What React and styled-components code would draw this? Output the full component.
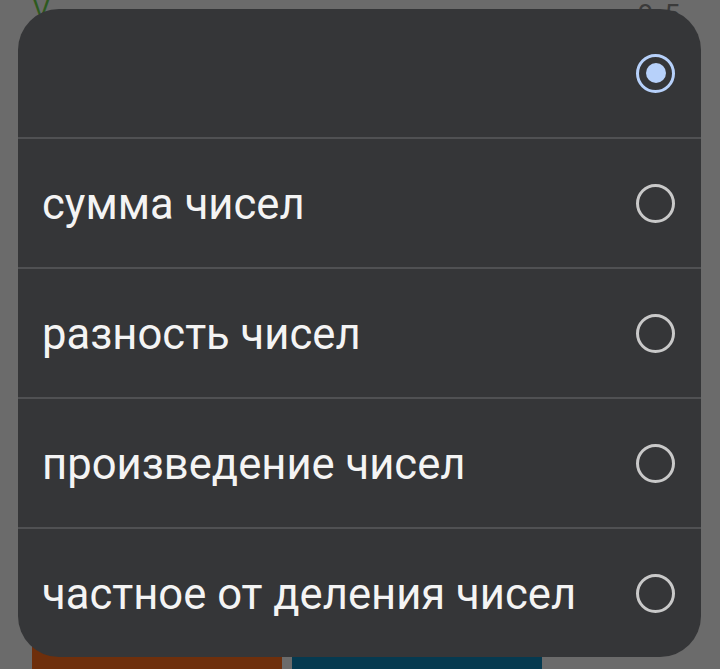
import styled, { createGlobalStyle } from 'styled-components'

const GlobalStyle = createGlobalStyle`
  html, body {
    margin: 0;
    padding: 0;
    background: #6b6b6b;
    font-family: Roboto, "Noto Sans", sans-serif;
  }
`

const Screen = styled.div`
  position: relative;
  width: 720px;
  height: 669px;
  overflow: hidden;
  background: #6b6b6b;
  display: flex;
  flex-direction: column;
  justify-content: space-between;
`

const StatusRow = styled.div`
  display: flex;
  justify-content: space-between;
  align-items: flex-start;
  padding: 0 38px 0 33px;
  height: 30px;
`

const AppTitle = styled.span`
  font-size: 26px;
  line-height: 20px;
  color: #2d5a1e;
`

const Clock = styled.span`
  font-size: 28px;
  line-height: 30px;
  color: #3b3b3b;
  letter-spacing: 2px;
`

const ButtonRow = styled.div`
  display: flex;
  gap: 10px;
  padding: 0 0 0 32px;
  margin-bottom: -26px;
`

const ActionButton = styled.div`
  width: 250px;
  height: 80px;
  border-radius: 20px;
  background: ${(p) => p.color};
`

const Dialog = styled.div`
  position: absolute;
  left: 18px;
  top: 9px;
  width: 683px;
  border-radius: 41px;
  background: #353638;
  overflow: hidden;
  display: flex;
  flex-direction: column;
`

const Option = styled.div`
  height: 128px;
  display: flex;
  align-items: center;
  justify-content: space-between;
  padding: 0 26px 0 24px;
  box-sizing: border-box;
  & + & {
    border-top: 2px solid #505153;
    height: 130px;
  }
`

const Label = styled.span`
  font-size: 43.6px;
  color: #f4f4f4;
  padding-top: 3px;
  white-space: nowrap;
`

const Radio = styled.span`
  width: 39px;
  height: 39px;
  box-sizing: border-box;
  border-radius: 50%;
  border: 3px solid ${(p) => (p.checked ? '#b7d1fa' : '#c9c9c9')};
  display: flex;
  align-items: center;
  justify-content: center;
  flex-shrink: 0;
  &::after {
    content: '';
    display: ${(p) => (p.checked ? 'block' : 'none')};
    width: 20px;
    height: 20px;
    border-radius: 50%;
    background: #b7d1fa;
  }
`

const options = [
  { label: '', checked: true },
  { label: 'сумма чисел' },
  { label: 'разность чисел' },
  { label: 'произведение чисел' },
  { label: 'частное от деления чисел' },
]

const App = () => {
  return (
    <>
      <GlobalStyle />
      <Screen>
        <StatusRow>
          <AppTitle>V</AppTitle>
          <Clock>9:5</Clock>
        </StatusRow>
        <ButtonRow>
          <ActionButton color="#6e2f0c" />
          <ActionButton color="#053a50" />
        </ButtonRow>

        <Dialog>
          {options.map((o, i) => (
            <Option key={i}>
              <Label>{o.label}</Label>
              <Radio checked={o.checked} />
            </Option>
          ))}
        </Dialog>
      </Screen>
    </>
  )
}

export default App
